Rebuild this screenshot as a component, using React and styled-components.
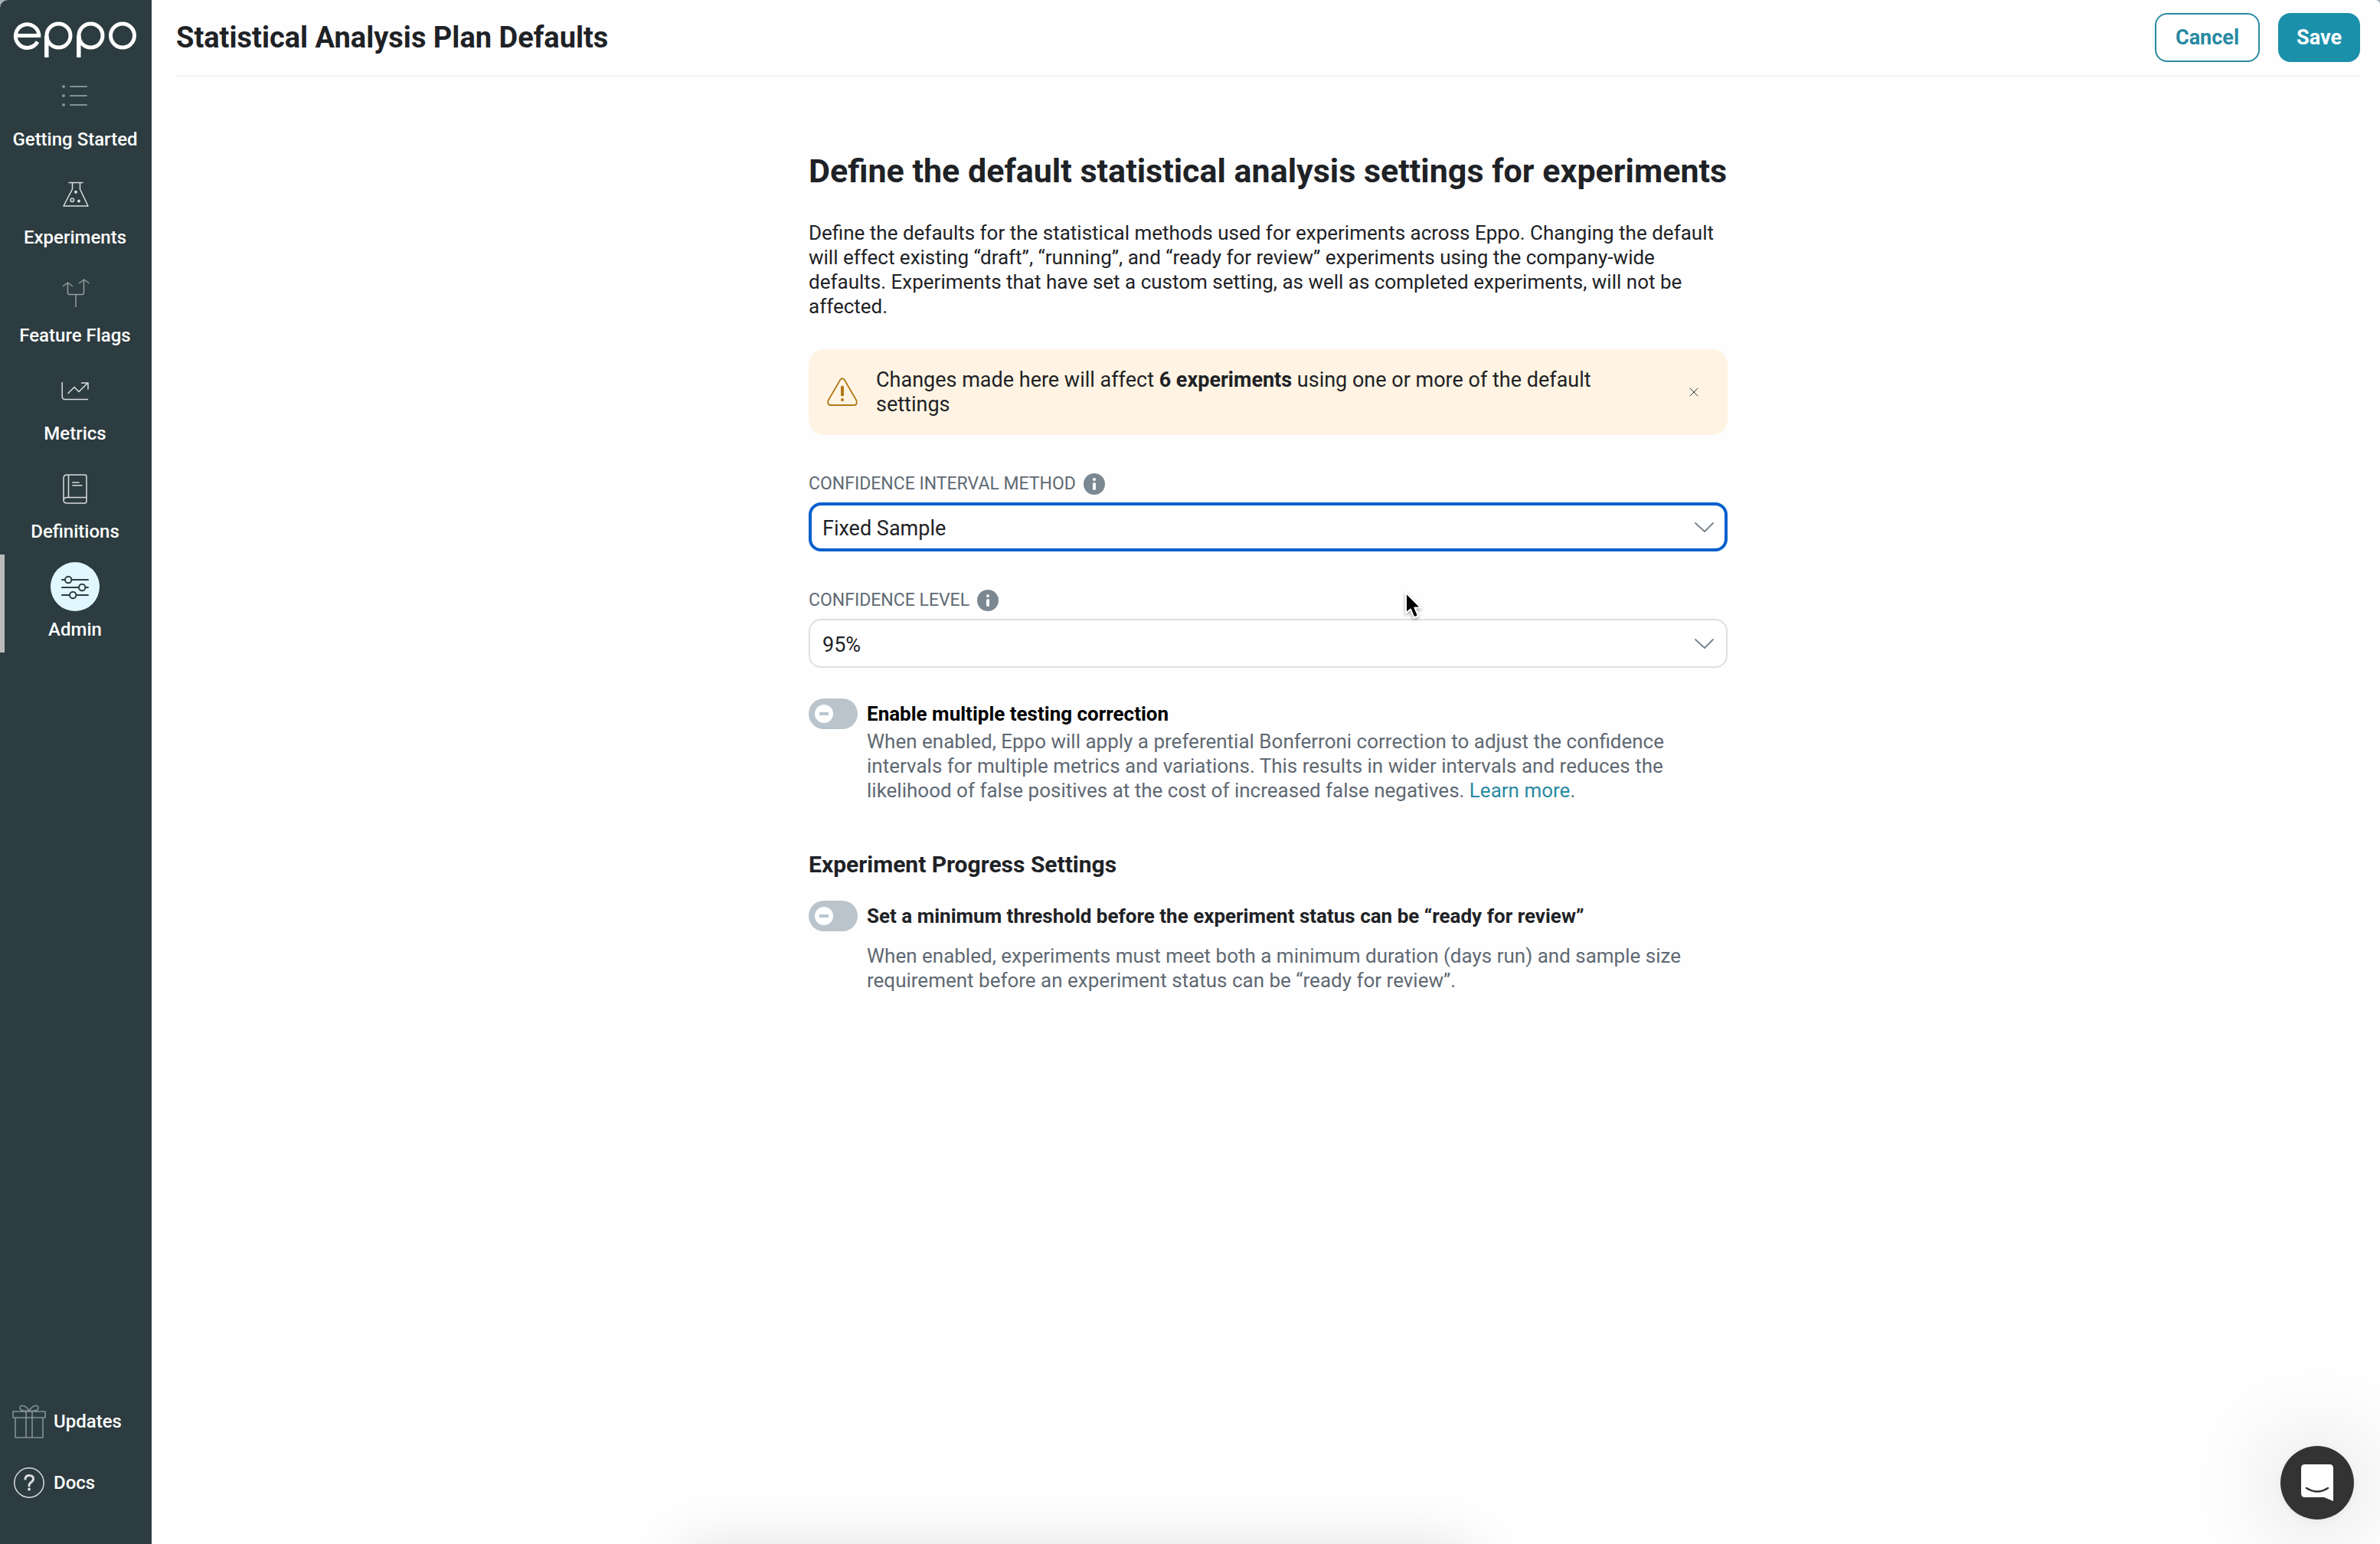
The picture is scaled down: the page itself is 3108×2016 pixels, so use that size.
import React, { useState } from 'react';
import styled, { createGlobalStyle, css } from 'styled-components';

const color = {
  ink: '#1e2226',
  muted: '#5f6973',
  teal: '#1b90ab',
  tealDark: '#2a8aa2',
  sidebar: '#2c3c40',
  focus: '#0060cc',
  border: '#dbe0e4',
  iconGray: '#7b8892',
};

const GlobalStyle = createGlobalStyle`
  *, *::before, *::after { box-sizing: border-box; }
  html { background: #a9b0b6; }
  body {
    margin: 0;
    color: ${color.ink};
    font-family: Roboto, "Liberation Sans", sans-serif;
    font-size: 26px;
    line-height: 32px;
  }
  h1, h2, h3, p, ul { margin: 0; padding: 0; }
  button, select, input { font-family: inherit; margin: 0; }
  svg { display: block; flex: none; }
`;

const Shell = styled.div`
  display: flex;
  min-height: 100vh;
  background: #fefefe;
  border-radius: 10px 6px 0 0;
  overflow: hidden;
`;

/* Sidebar */

const Sidebar = styled.aside`
  flex: none;
  display: flex;
  flex-direction: column;
  width: 198px;
  background: ${color.sidebar};
`;

const LogoLink = styled.a`
  display: flex;
  height: 84px;
  padding: 26px 0 0 16px;
`;

const NavList = styled.ul`
  list-style: none;
`;

const NavLink = styled.a`
  display: flex;
  flex-direction: column;
  align-items: center;
  gap: 8px;
  height: 128px;
  padding: 10px 2px 0 0;
  color: #fff;
  font-size: 24px;
  font-weight: 500;
  text-decoration: none;
  white-space: nowrap;
  box-shadow: ${(p) => (p.$active ? 'inset 6px 0 0 #bbbbbb' : 'none')};
`;

const NavIcon = styled.span`
  display: flex;
  align-items: center;
  justify-content: center;
  width: 64px;
  height: 64px;
  border-radius: 50%;
  color: ${(p) => (p.$active ? color.sidebar : p.$tone)};
  background: ${(p) => (p.$active ? '#e0f7ff' : 'transparent')};
`;

const InlineIcon = styled.span`
  display: flex;
  color: ${(p) => p.$tone};
`;

const FooterLinks = styled.div`
  margin-top: auto;
  padding: 0 16px 40px;
`;

const FooterLink = styled.a`
  display: flex;
  align-items: center;
  gap: 10px;
  height: 80px;
  color: #fff;
  font-size: 24px;
  font-weight: 500;
  text-decoration: none;
`;

/* Main area */

const Main = styled.main`
  flex: 1;
  min-width: 0;
  padding: 0 26px 0 32px;
`;

const Header = styled.header`
  display: flex;
  align-items: center;
  gap: 24px;
  height: 100px;
  border-bottom: 2px solid #f3f3f4;
`;

const PageTitle = styled.h1`
  flex: 1;
  font-size: 38px;
  line-height: 48px;
  font-weight: 700;
`;

const Button = styled.button`
  height: 64px;
  padding: 0 ${(p) => (p.$primary ? '22px' : '25px')};
  border: 2px solid ${(p) => (p.$primary ? color.teal : color.tealDark)};
  border-radius: 16px;
  font-size: 27px;
  font-weight: 700;
  line-height: 32px;
  color: ${(p) => (p.$primary ? '#fff' : color.tealDark)};
  background: ${(p) => (p.$primary ? color.teal : '#fff')};
  cursor: pointer;
`;

const Content = styled.form`
  max-width: 1200px;
  margin: 0 auto;
  padding: 96px 0;
`;

const Heading = styled.h2`
  margin-bottom: 38px;
  font-size: 43px;
  line-height: 54px;
  font-weight: 700;
  white-space: nowrap;
`;

const Subheading = styled.h3`
  margin: 64px 0 30px;
  font-size: 30px;
  line-height: 34px;
  font-weight: 700;
`;

const Alert = styled.div`
  display: flex;
  align-items: center;
  gap: 24px;
  margin: 40px 0 50px;
  padding: 24px;
  border-radius: 20px;
  background: #fff4e3;
  font-size: 27px;
`;

const AlertText = styled.p`
  flex: 1;
`;

const CloseButton = styled.button`
  display: flex;
  align-items: center;
  justify-content: center;
  width: 40px;
  height: 40px;
  padding: 0;
  border: 0;
  background: none;
  color: #33363a;
  cursor: pointer;
`;

const Field = styled.div`
  display: flex;
  flex-direction: column;
  gap: 10px;
  margin-bottom: ${(p) => (p.$last ? '40px' : '50px')};
`;

const FieldLabel = styled.div`
  display: flex;
  align-items: center;
  gap: 10px;
  height: 28px;
  color: ${color.muted};
  font-size: 23px;
  text-transform: uppercase;
`;

const SelectBox = styled.div`
  display: grid;
  align-items: center;

  > * { grid-area: 1 / 1; }
  > svg {
    justify-self: end;
    margin-right: 18px;
    pointer-events: none;
  }
`;

const Select = styled.select`
  appearance: none;
  width: 100%;
  height: 64px;
  border: 2px solid ${color.border};
  border-radius: 16px;
  padding: 4px 16px 0;
  outline: none;
  background: #fff;
  color: ${color.ink};
  font-size: 27px;
  ${(p) => p.$focused && css`
    border: 4px solid ${color.focus};
    padding: 4px 14px 0;
  `}
`;

const ToggleRow = styled.div`
  display: grid;
  grid-template-columns: 64px 1fr;
  column-gap: 12px;
  row-gap: ${(p) => (p.$spaced ? '16px' : '0')};
`;

const ToggleInput = styled.input`
  appearance: none;
  display: flex;
  align-items: center;
  width: 64px;
  height: 40px;
  padding: 0 8px;
  border-radius: 20px;
  background: ${(p) => (p.checked ? color.teal : '#bac4cc')};
  justify-content: ${(p) => (p.checked ? 'flex-end' : 'flex-start')};
  cursor: pointer;

  &::before {
    content: '';
    width: 24px;
    height: 24px;
    border-radius: 50%;
    background: linear-gradient(#bac4cc, #bac4cc) center / 12px 4px no-repeat #fff;
  }
`;

const ToggleLabel = styled.label`
  color: ${(p) => (p.$strong ? '#000' : color.ink)};
  font-weight: 700;
  line-height: 40px;
`;

const ToggleHint = styled.p`
  grid-column: 2;
  color: ${color.muted};
`;

const TextLink = styled.a`
  color: ${color.tealDark};
  text-decoration: none;
`;

/* Overlays */

const ChatButton = styled.button`
  position: fixed;
  right: 34px;
  bottom: 32px;
  display: flex;
  align-items: center;
  justify-content: center;
  width: 96px;
  height: 96px;
  padding: 0;
  border: 0;
  border-radius: 50%;
  background: #333;
  box-shadow: 0 2px 12px rgba(0, 0, 0, 0.06), 0 4px 120px rgba(0, 0, 0, 0.2);
  cursor: pointer;
`;

const DockShadow = styled.div`
  position: fixed;
  left: 28.5%;
  right: 38%;
  bottom: -200px;
  height: 200px;
  border-radius: 40px;
  box-shadow: 0 0 72px rgba(0, 0, 0, 0.11);
  pointer-events: none;
`;

const Pointer = styled.div`
  position: absolute;
  left: 1834px;
  top: 772px;
  pointer-events: none;
  filter: drop-shadow(0 2px 2px rgba(0, 0, 0, 0.35));
`;

/* Drawings */

const Logo = () => (
  <svg width="164" height="52" viewBox="0 0 164 52" fill="none" stroke="#fff" strokeWidth="5" role="img" aria-label="eppo">
    <path d="M33 28.500A15.300 15.300 0 1 1 34.900 20.500M4.500 20.500H37.300" />
    <circle cx="60.500" cy="20.500" r="15.500" />
    <path d="M44.800 20.500V49" strokeWidth="5.500" />
    <circle cx="102.500" cy="20.500" r="15.500" />
    <path d="M86.800 20.500V49" strokeWidth="5.500" />
    <circle cx="144" cy="20.500" r="15.500" />
  </svg>
);

const Icon = ({ w = 40, h = 40, sw = 1.5, children }) => (
  <svg width={w} height={h} viewBox={`0 0 ${w} ${h}`} fill="none" stroke="currentColor" strokeWidth={sw} strokeLinecap="round" strokeLinejoin="round" aria-hidden="true">
    {children}
  </svg>
);

const ListIcon = () => (
  <Icon sw={2}>
    <path d="M14 7H35M14 19H35M14 31H35" />
    <g fill="currentColor" stroke="none">
      <circle cx="5" cy="7" r="2" />
      <circle cx="5" cy="19" r="2" />
      <circle cx="5" cy="31" r="2" />
    </g>
  </Icon>
);

const FlaskIcon = () => (
  <Icon>
    <path d="M12 4.500H30M16.500 4.500V13L5 35H37L26.500 13V4.500" />
    <circle cx="16.300" cy="27.300" r="2.200" />
    <circle cx="21" cy="16.800" r="1.200" fill="currentColor" />
    <circle cx="25" cy="28.500" r="1.200" fill="currentColor" />
  </Icon>
);

const BranchIcon = () => (
  <Icon>
    <path d="M21 38.500V23M10.500 7.500V20Q10.500 22.500 13 22.500H29Q31.500 22.500 31.500 20V4M4.500 11.500L10.500 7L16.500 11.500M25.500 7.500L32 3L38 7.500" />
  </Icon>
);

const TrendIcon = () => (
  <Icon>
    <path d="M3.200 9.500V27.500Q3.200 31.500 7.200 31.500H36.500M11 23.500L19 15.500L25 21.500L36.500 10M28.500 10H37V18" />
  </Icon>
);

const BookIcon = () => (
  <Icon>
    <path d="M9.500 2H32.500Q35 2 35 4.500V36.500Q35 39 32.500 39H9.500Q5 39 5 35V6.500Q5 2 9.500 2ZM11.500 2V31.500M5 35Q5.500 31.500 9.500 31.500H35M16.800 12H25M16.800 15.800H29" />
  </Icon>
);

const SlidersIcon = () => (
  <Icon sw={2}>
    <path d="M3 11H7M15.500 11H37M3 21H25M33.500 21H37M3 31H12.800M21.500 31H37" />
    <circle cx="11.200" cy="11" r="4.200" />
    <circle cx="29.200" cy="21" r="4.200" />
    <circle cx="17.200" cy="31" r="4.200" />
  </Icon>
);

const GiftIcon = () => (
  <Icon w={44} h={44} sw={1.6}>
    <path d="M1 9H43V17H1ZM4 17V43H40V17M18 9V43M26 9V43M22 8C16 9 10 8 10 4C10 0 17 0 22 8C27 0 34 0 34 4C34 8 28 9 22 8" />
  </Icon>
);

const HelpIcon = () => (
  <Icon w={44} h={44}>
    <circle cx="22" cy="22" r="19.200" />
    <path d="M17 17Q17.500 12.500 22 12.500Q27.500 12.500 27.500 17Q27.500 19.500 24.500 21.500Q22 23.200 22 26" strokeWidth="3" />
    <circle cx="22" cy="30.500" r="1.900" fill="currentColor" stroke="none" />
  </Icon>
);

const WarningIcon = () => (
  <Icon w={40} h={40} sw={1.8}>
    <path d="M17.200 4Q20 0.500 22.800 4L38.500 31Q39.500 37 35.500 37H4.500Q0.500 37 1.500 31Z" />
    <path d="M20 13.500V23.500" strokeWidth="4" />
    <circle cx="20" cy="30" r="2" fill="currentColor" stroke="none" />
  </Icon>
);

const InfoIcon = () => (
  <svg width="28" height="28" viewBox="0 0 28 28" aria-hidden="true">
    <circle cx="14" cy="14" r="14" fill={color.iconGray} />
    <circle cx="14" cy="8" r="2" fill="#fff" />
    <path d="M14 14V20" stroke="#fff" strokeWidth="4" strokeLinecap="round" />
  </svg>
);

const Chevron = () => (
  <svg width="26" height="14" viewBox="0 0 26 14" fill="none" stroke={color.iconGray} strokeWidth="2" strokeLinecap="round" strokeLinejoin="round" aria-hidden="true">
    <path d="M2 2L14 13L25 2" />
  </svg>
);

const navItems = [
  { label: 'Getting Started', icon: ListIcon, tone: '#84919a' },
  { label: 'Experiments', icon: FlaskIcon, tone: '#d9dcdd' },
  { label: 'Feature Flags', icon: BranchIcon, tone: '#959d9f' },
  { label: 'Metrics', icon: TrendIcon, tone: '#d9dcdd' },
  { label: 'Definitions', icon: BookIcon, tone: '#d9dcdd' },
  { label: 'Admin', icon: SlidersIcon, active: true },
];

function SelectField({ id, label, options, focused, last }) {
  return (
    <Field $last={last}>
      <FieldLabel>
        <label htmlFor={id}>{label}</label>
        <InfoIcon />
      </FieldLabel>
      <SelectBox>
        <Select id={id} $focused={focused} defaultValue={options[0]}>
          {options.map((o) => <option key={o}>{o}</option>)}
        </Select>
        <Chevron />
      </SelectBox>
    </Field>
  );
}

function Toggle({ id, label, strong, spaced, children }) {
  const [on, setOn] = useState(false);
  return (
    <ToggleRow $spaced={spaced}>
      <ToggleInput id={id} type="checkbox" checked={on} onChange={() => setOn(!on)} />
      <ToggleLabel htmlFor={id} $strong={strong}>{label}</ToggleLabel>
      <ToggleHint>{children}</ToggleHint>
    </ToggleRow>
  );
}

export default function App() {
  return (
    <>
      <GlobalStyle />
      <Shell>
        <Sidebar>
          <LogoLink href="#home"><Logo /></LogoLink>
          <nav>
            <NavList>
              {navItems.map(({ label, icon: Glyph, tone, active }) => (
                <li key={label}>
                  <NavLink href={`#${label}`} $active={active}>
                    <NavIcon $active={active} $tone={tone}><Glyph /></NavIcon>
                    {label}
                  </NavLink>
                </li>
              ))}
            </NavList>
          </nav>
          <FooterLinks>
            <FooterLink href="#updates">
              <InlineIcon $tone="#84919a"><GiftIcon /></InlineIcon>
              Updates
            </FooterLink>
            <FooterLink href="#docs">
              <InlineIcon $tone="#d9dcdd"><HelpIcon /></InlineIcon>
              Docs
            </FooterLink>
          </FooterLinks>
        </Sidebar>

        <Main>
          <Header>
            <PageTitle>Statistical Analysis Plan Defaults</PageTitle>
            <Button type="button">Cancel</Button>
            <Button type="submit" form="plan" $primary>Save</Button>
          </Header>

          <Content id="plan" onSubmit={(e) => e.preventDefault()}>
            <Heading>Define the default statistical analysis settings for experiments</Heading>
            <p>
              Define the defaults for the statistical methods used for experiments across Eppo. Changing the default
              will effect existing “draft”, “running”, and “ready for review” experiments using the company-wide
              defaults. Experiments that have set a custom setting, as well as completed experiments, will not be
              affected.
            </p>

            <Alert role="alert">
              <InlineIcon $tone="#b27715"><WarningIcon /></InlineIcon>
              <AlertText>
                Changes made here will affect <strong>6 experiments</strong> using one or more of the default settings
              </AlertText>
              <CloseButton type="button" aria-label="Dismiss">
                <Icon w={12} h={12} sw={1}><path d="M1 1L11 11M11 1L1 11" /></Icon>
              </CloseButton>
            </Alert>

            <SelectField id="method" label="Confidence interval method" options={['Fixed Sample', 'Sequential', 'Bayesian']} focused />
            <SelectField id="level" label="Confidence level" options={['95%', '90%', '99%']} last />

            <Toggle id="correction" label="Enable multiple testing correction" strong>
              When enabled, Eppo will apply a preferential Bonferroni correction to adjust the confidence
              intervals for multiple metrics and variations. This results in wider intervals and reduces the
              likelihood of false positives at the cost of increased false negatives.{' '}
              <TextLink href="#learn">Learn more</TextLink>.
            </Toggle>

            <Subheading>Experiment Progress Settings</Subheading>

            <Toggle id="threshold" label="Set a minimum threshold before the experiment status can be “ready for review”" spaced>
              When enabled, experiments must meet both a minimum duration (days run) and sample size
              requirement before an experiment status can be “ready for review”.
            </Toggle>
          </Content>
        </Main>
      </Shell>

      <DockShadow />
      <ChatButton type="button" aria-label="Open chat">
        <svg width="44" height="50" viewBox="0 0 44 50" aria-hidden="true">
          <path d="M6 1H38Q43 1 43 6V49L31 44H6Q1 44 1 39V6Q1 1 6 1Z" fill="#fff" />
          <path d="M8 32Q22 41 36 32" fill="none" stroke="#333" strokeWidth="2.500" strokeLinecap="round" />
        </svg>
      </ChatButton>
      <Pointer>
        <svg width="26" height="38" viewBox="0 0 26 38" aria-hidden="true">
          <path d="M2 2V28.500L8 23.500L12.500 34.500L18 32L13.500 21.500H21.500Z" fill="#000" stroke="#fff" strokeWidth="2" strokeLinejoin="round" />
        </svg>
      </Pointer>
    </>
  );
}
